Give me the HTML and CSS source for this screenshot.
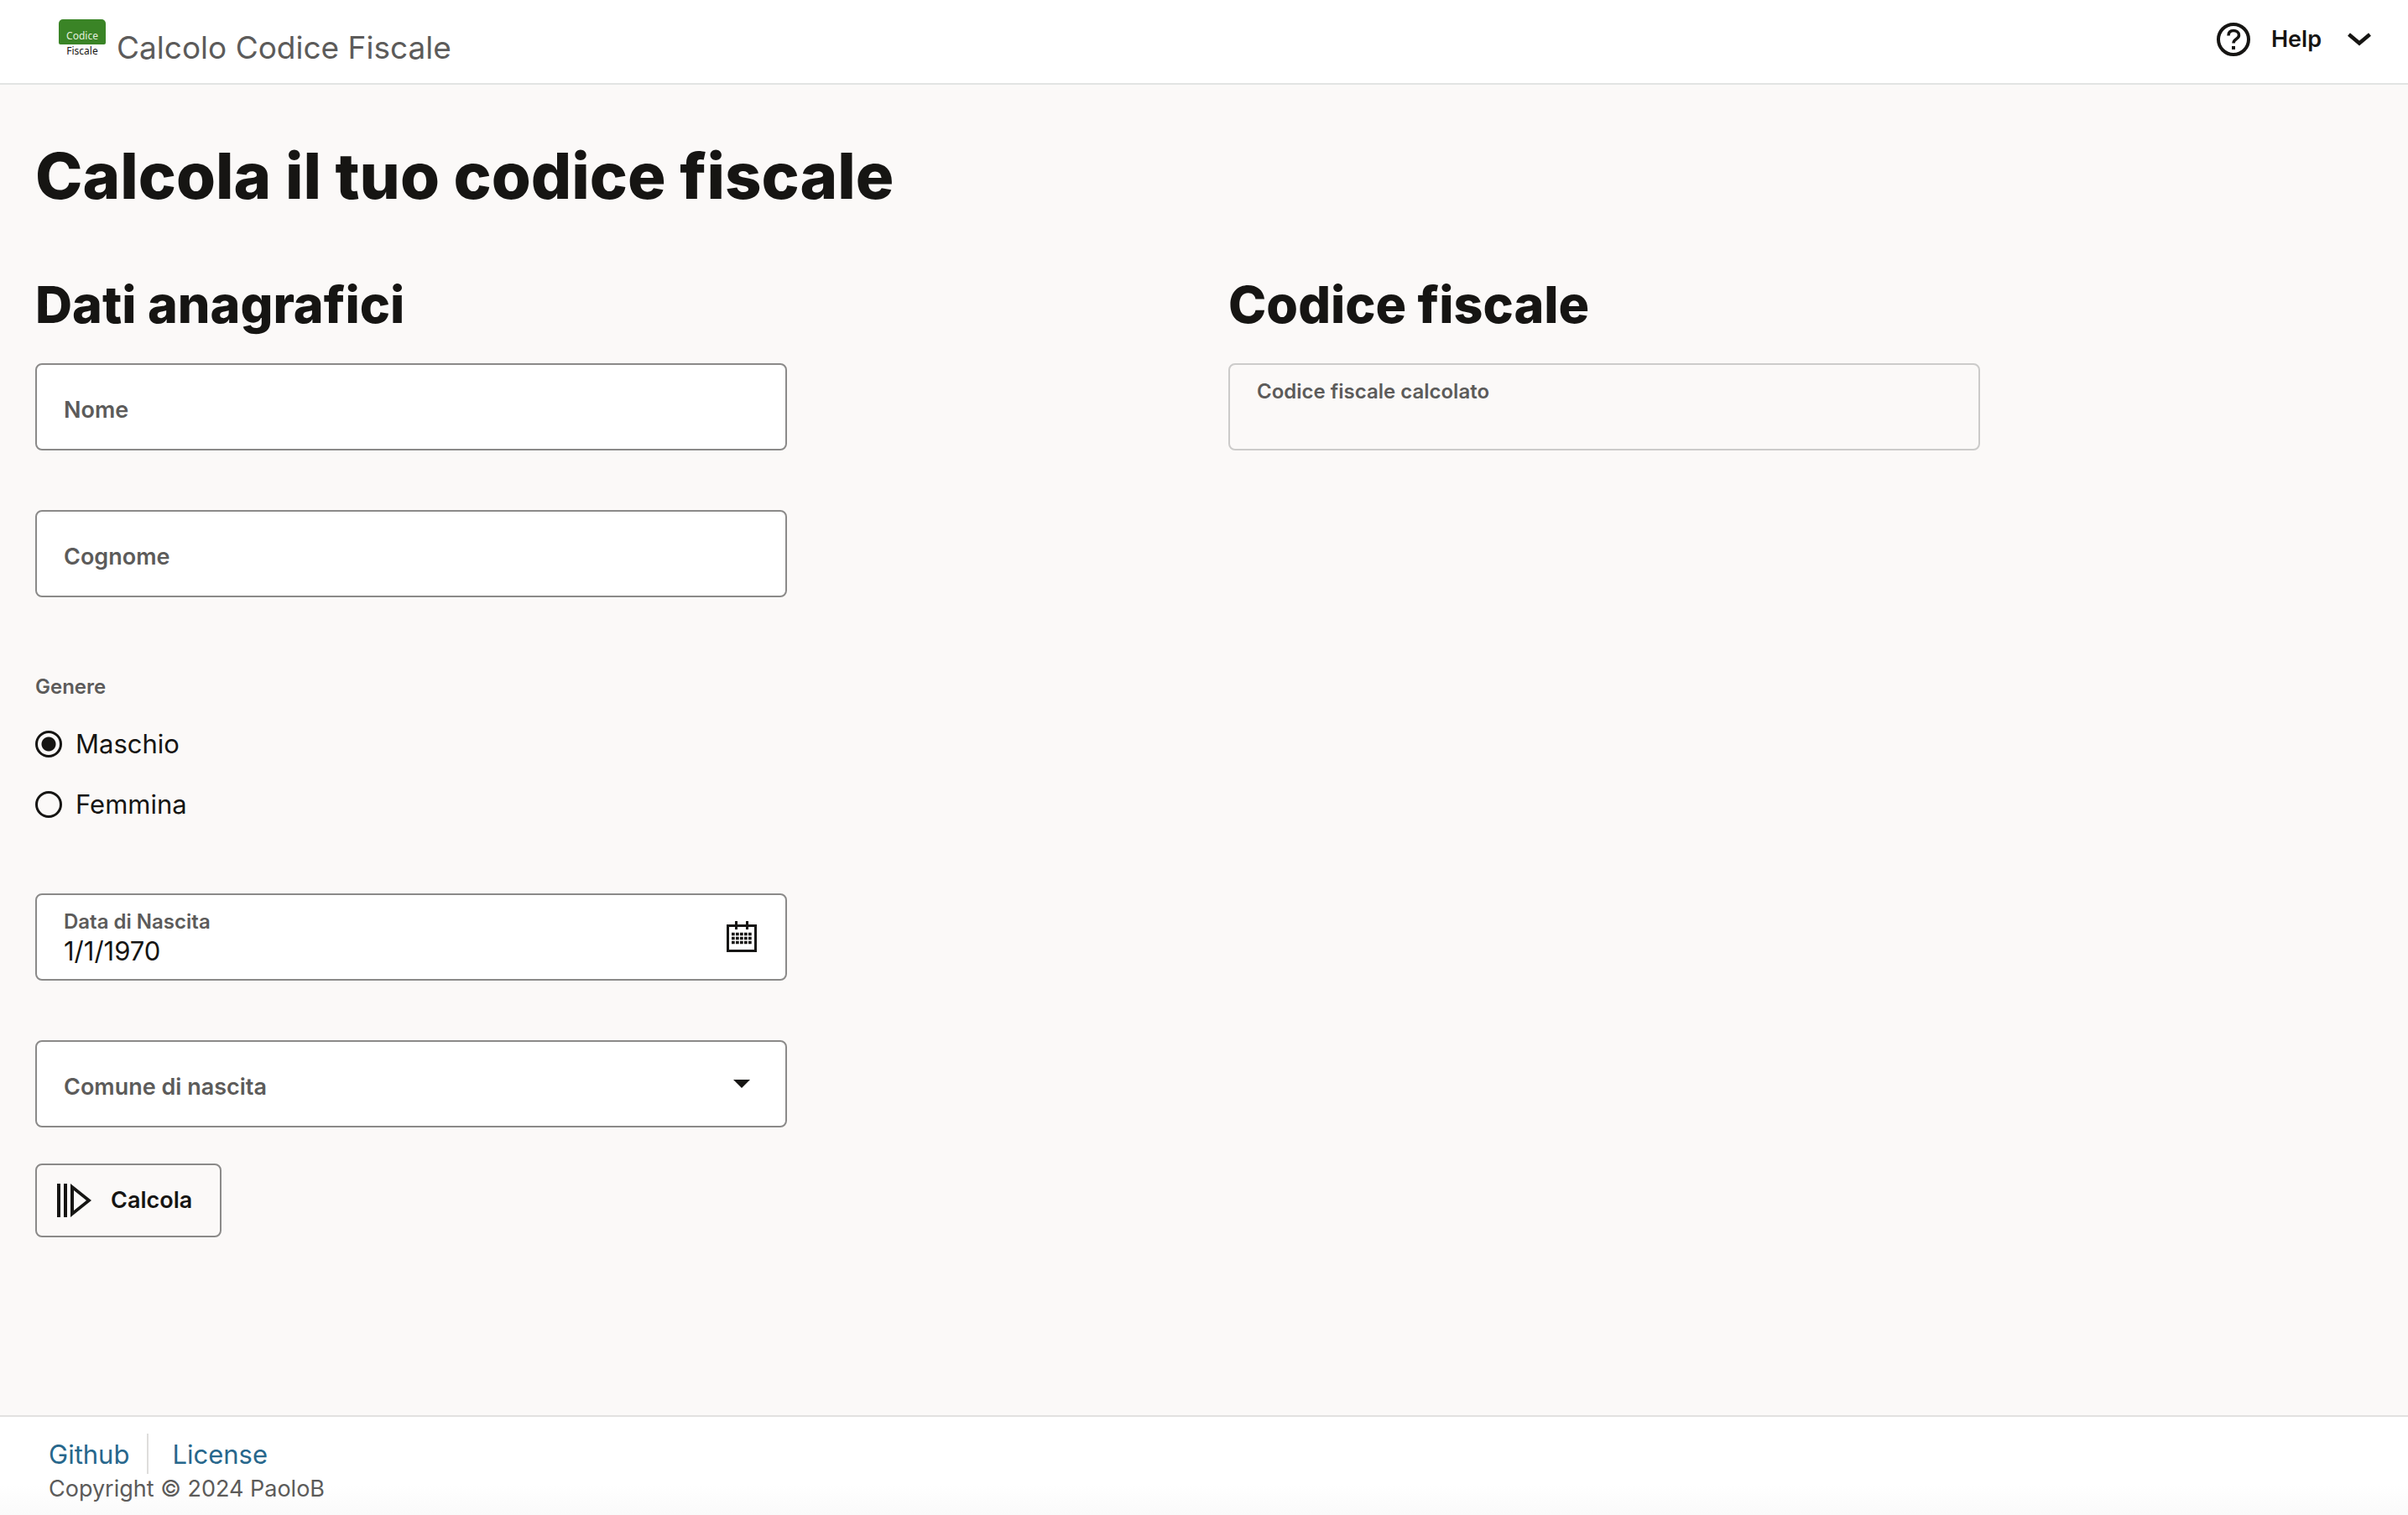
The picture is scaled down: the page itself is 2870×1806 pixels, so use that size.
FILE: index.html
```html
<!DOCTYPE html>
<html lang="it">
<head>
<meta charset="utf-8">
<meta name="viewport" content="width=device-width, initial-scale=1">
<title>Calcolo Codice Fiscale</title>
<link rel="stylesheet" href="styles.css">
</head>
<body>
<header class="header">
  <div class="brand">
    <span class="logo" aria-hidden="true"><span class="logo-top">Codice</span><span class="logo-bottom">Fiscale</span></span>
    <span class="app-name">Calcolo Codice Fiscale</span>
  </div>
  <button class="help" type="button">
    <svg class="help-icon" viewBox="0 0 40 40" aria-hidden="true"><circle cx="20" cy="20" r="18" fill="none" stroke="currentColor" stroke-width="4"/><path d="M14 15.500c0-4 2.500-6 6-6s6.500 2 6.500 5.500c0 5-6.500 4-6.500 9.500" fill="none" stroke="currentColor" stroke-width="3.500"/><path d="M18 28h4v4h-4z" fill="currentColor"/></svg>
    <span>Help</span>
    <svg class="chevron" viewBox="0 0 28 16" aria-hidden="true"><path d="M1.500 2 14 12.500 26.500 2" fill="none" stroke="currentColor" stroke-width="4.500"/></svg>
  </button>
</header>
<main class="main">
  <h1 class="title">Calcola il tuo codice fiscale</h1>
  <div class="columns">
    <form class="form">
      <h2 class="subtitle">Dati anagrafici</h2>
      <div class="field">
        <input class="control" id="nome" type="text">
        <label class="inside-label" for="nome">Nome</label>
      </div>
      <div class="field">
        <input class="control" id="cognome" type="text">
        <label class="inside-label" for="cognome">Cognome</label>
      </div>
      <fieldset class="gender">
        <legend class="legend">Genere</legend>
        <label class="choice"><input class="radio" type="radio" name="genere" checked><span>Maschio</span></label>
        <label class="choice"><input class="radio" type="radio" name="genere"><span>Femmina</span></label>
      </fieldset>
      <div class="field">
        <input class="control filled" id="data" type="text" value="1/1/1970">
        <label class="top-label" for="data">Data di Nascita</label>
        <button class="field-button" type="button" aria-label="Calendario">
          <svg class="calendar" viewBox="0 0 38 38" aria-hidden="true"><path d="M2.500 5.500h33v30h-33z" fill="none" stroke="currentColor" stroke-width="3"/><path d="M12.500 0v10M25.500 0v10" stroke="currentColor" stroke-width="3"/><path d="M7 15.500h24M7 20.500h24M7 25.500h24" stroke="currentColor" stroke-width="3.500" stroke-dasharray="3.700 1.300"/></svg>
        </button>
      </div>
      <div class="field">
        <select class="control" id="comune"><option value=""></option></select>
        <label class="inside-label" for="comune">Comune di nascita</label>
        <svg class="arrow" viewBox="0 0 20 10" aria-hidden="true"><path d="M0 0h20L10 10z" fill="currentColor"/></svg>
      </div>
      <button class="submit" type="button">
        <svg class="run-icon" viewBox="0 0 42 40" aria-hidden="true"><path d="M0 0h4v40H0zM8 0h4v40H8z" fill="currentColor"/><path d="M16 0 41 20 16 40zM20 8v24l15-12z" fill="currentColor" fill-rule="evenodd"/></svg>
        <span>Calcola</span>
      </button>
    </form>
    <section class="result">
      <h2 class="subtitle">Codice fiscale</h2>
      <div class="field">
        <input class="control readonly" id="codice" type="text" readonly>
        <label class="top-label" for="codice">Codice fiscale calcolato</label>
      </div>
    </section>
  </div>
</main>
<footer class="footer">
  <nav class="links"><a class="link" href="#">Github</a><a class="link" href="#">License</a></nav>
  <p class="copyright">Copyright © 2024 PaoloB</p>
</footer>
</body>
</html>
```
FILE: styles.css
```css
* { box-sizing: border-box; }

body {
  display: flex;
  flex-direction: column;
  min-height: 100vh;
  margin: 0;
  background: #fbf9f8;
  color: #161513;
  font-family: Inter, "Liberation Sans", sans-serif;
  font-size: 31px;
  line-height: 40px;
}

h1, h2, p { margin: 0; }

button, input, select { font: inherit; color: inherit; }

.header {
  display: flex;
  align-items: flex-start;
  justify-content: space-between;
  padding: 23px 44px 18px 69px;
  background: #fff;
  border-bottom: 2px solid #e2e4e3;
}

.brand { display: flex; align-items: flex-start; gap: 12px; }

.logo {
  display: flex;
  flex-direction: column;
  width: 58px;
  padding: 0 1px;
  font-family: "Noto Sans", sans-serif;
  font-size: 12px;
  line-height: 16px;
  text-align: center;
}

.logo-top {
  height: 30px;
  padding-top: 12px;
  border-radius: 5px 5px 2px 2px;
  background: #3a8426;
  color: #e4f0df;
}

.logo-bottom { height: 20px; }

.app-name { padding-top: 10px; color: #5c5b5a; font-size: 37px; line-height: 48px; }

.help {
  display: flex;
  align-items: center;
  padding: 4px 0 0;
  border: 0;
  background: none;
  font-size: 27px;
  font-weight: 600;
}

.help-icon { width: 40px; height: 40px; margin-right: 25px; }
.chevron { width: 28px; height: 16px; margin-left: 31px; }

.main { flex: 1; padding: 60px 42px; }

.title { font-size: 76px; font-weight: 800; line-height: 96px; }

.columns {
  display: grid;
  grid-template-columns: 1fr 1fr;
  gap: 58px;
  margin-top: 66px;
}

.subtitle { font-size: 61px; font-weight: 800; line-height: 80px; margin-bottom: 30px; }

.field {
  display: grid;
  grid-template-columns: 1fr auto;
  align-items: center;
  max-width: 896px;
  height: 104px;
  margin-bottom: 71px;
}

.control {
  grid-area: 1 / 1 / 2 / 3;
  width: 100%;
  height: 104px;
  padding: 0 32px;
  border: 2px solid #8b8a89;
  border-radius: 8px;
  background: #fff;
  appearance: none;
}

.filled { padding-top: 32px; }
.readonly { border-color: #cccbca; background: transparent; }

.inside-label, .top-label {
  grid-area: 1 / 1;
  z-index: 1;
  padding-left: 34px;
  color: #5c5b5a;
  font-weight: 600;
  pointer-events: none;
}

.inside-label { padding-top: 8px; font-size: 27px; }
.top-label { align-self: start; padding-top: 18px; font-size: 24px; line-height: 32px; }

.field-button {
  grid-area: 1 / 2;
  z-index: 1;
  display: flex;
  margin-right: 35px;
  padding: 0;
  border: 0;
  background: none;
}

.calendar { width: 38px; height: 38px; }
.arrow { grid-area: 1 / 2; z-index: 1; width: 20px; height: 10px; margin-right: 44px; pointer-events: none; }

.gender {
  display: flex;
  flex-direction: column;
  gap: 32px;
  margin: 0 0 86px;
  padding: 0;
  border: 0;
}

.legend {
  padding: 20px 0 32px;
  color: #5c5b5a;
  font-size: 24px;
  font-weight: 600;
  line-height: 32px;
}

.choice { display: flex; align-items: center; gap: 16px; }

.radio {
  width: 32px;
  height: 32px;
  margin: 0;
  border: 3px solid #161513;
  border-radius: 50%;
  appearance: none;
}

.radio:checked { background: radial-gradient(circle, #161513 8px, transparent 9px); }

.submit {
  display: flex;
  align-items: center;
  gap: 22px;
  height: 88px;
  margin-top: -28px;
  padding: 0 33px 0 24px;
  border: 2px solid #8b8a89;
  border-radius: 8px;
  background: none;
  font-size: 27px;
  font-weight: 600;
}

.run-icon { width: 42px; height: 40px; }

.footer {
  padding: 20px 58px 14px;
  border-top: 2px solid #e2e1e0;
  background: linear-gradient(#fff 70%, #fafafa);
}

.links { display: flex; }

.link {
  height: 48px;
  padding-top: 5px;
  color: #27678c;
  text-decoration: none;
}

.link + .link { margin-left: 21px; padding-left: 28px; border-left: 2px solid #dedddc; }

.copyright { color: #5c5b5a; font-size: 27px; line-height: 35px; }
```
